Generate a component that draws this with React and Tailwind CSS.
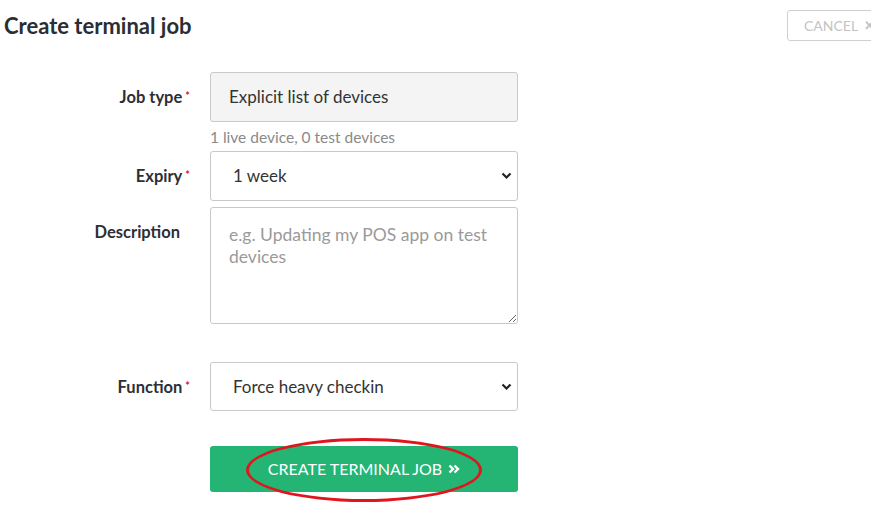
import React from "react";

const Chevron = () => (
  <svg
    className="pointer-events-none absolute right-[6px] top-1/2 -translate-y-1/2"
    width="11"
    height="8"
    viewBox="0 0 11 8"
  >
    <path d="M1.5 1.5 L5.5 5.5 L9.5 1.5" fill="none" stroke="#222" strokeWidth="2.2" />
  </svg>
);

const Label = ({ children, required }) => (
  <div className="flex h-[50px] items-center justify-end pr-[20px] text-[16.5px] font-bold text-[#2c2f36]">
    <span>{children}</span>
    {required ? (
      <span className="ml-[3px] -mt-[2px] text-[11px] text-[#e0113c]">*</span>
    ) : (
      <span className="ml-[3px] w-[7px]" />
    )}
  </div>
);

export default function App() {
  return (
    <main className="relative h-[510px] w-[871px] overflow-hidden bg-white font-['Lato',sans-serif] text-[#2c2f36]">
      <header className="flex items-center justify-between pt-[10px]">
        <h1 className="pl-[4px] text-[22px] font-bold leading-[30px] text-[#2a2d33]">
          Create terminal job
        </h1>
        <button className="-mr-[20px] flex h-[31px] w-[104px] items-center gap-[6px] rounded-[3px] border border-[#cfcfcf] px-[16px] text-[14px] text-[#c3c3c3]">
          CANCEL <span className="text-[13px] font-bold">✕</span>
        </button>
      </header>

      <form className="mt-[31px] grid grid-cols-[210px_308px] items-start">
        <Label required>Job type</Label>
        <div>
          <div className="flex h-[50px] items-center rounded-[3px] border border-[#c9c9c9] bg-[#f4f4f4] pl-[18px] text-[17px] text-[#333]">
            Explicit list of devices
          </div>
          <p className="mt-[5px] text-[15.5px] leading-[20px] text-[#8a8a8a]">
            1 live device, 0 test devices
          </p>
        </div>

        <div className="col-span-2 h-[4px]" />

        <Label required>Expiry</Label>
        <div className="relative">
          <select
            defaultValue="1 week"
            className="h-[50px] w-full appearance-none rounded-[3px] border border-[#c9c9c9] bg-white pl-[22px] text-[17px] text-[#333] outline-none"
          >
            <option>1 week</option>
          </select>
          <Chevron />
        </div>

        <div className="col-span-2 h-[6px]" />

        <Label>Description</Label>
        <textarea
          placeholder="e.g. Updating my POS app on test devices"
          className="h-[117px] w-full rounded-[3px] border border-[#c9c9c9] pl-[18px] pr-[14px] pt-[16px] text-[17.5px] leading-[22px] text-[#333] outline-none placeholder:text-[#9a9a9a]"
        />

        <div className="col-span-2 h-[38px]" />

        <Label required>Function</Label>
        <div className="relative">
          <select
            defaultValue="Force heavy checkin"
            className="h-[49px] w-full appearance-none rounded-[3px] border border-[#c9c9c9] bg-white pl-[22px] text-[17px] text-[#333] outline-none"
          >
            <option>Force heavy checkin</option>
          </select>
          <Chevron />
        </div>

        <div className="col-span-2 h-[34px]" />

        <div />
        <button
          type="button"
          className="flex h-[46px] w-full items-center justify-center gap-[6px] rounded-[3px] bg-[#24b574] text-[16px] text-white"
        >
          CREATE TERMINAL JOB
          <svg width="12" height="10" viewBox="0 0 12 10">
            <path d="M1.5 1.5 L5 5 L1.5 8.5 M6.5 1.5 L10 5 L6.5 8.5" fill="none" stroke="#fff" strokeWidth="2.4" />
          </svg>
        </button>
      </form>

      <div className="pointer-events-none absolute left-[246px] top-[438px] h-[64px] w-[236px] rounded-[50%] border-[3px] border-[#e0161e]" />
    </main>
  );
}
